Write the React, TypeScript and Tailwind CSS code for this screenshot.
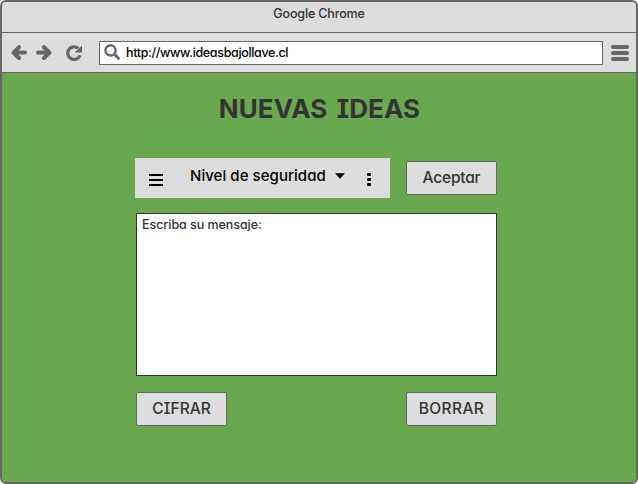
import type { ReactNode } from "react";

function Button({ children, spacing = "" }: { children: ReactNode; spacing?: string }) {
  return (
    <button
      className={`flex h-[34px] w-[91px] items-center justify-center rounded-[2px] border border-[#666] bg-[#ddd] pb-px text-[15.5px] font-[450] whitespace-nowrap text-[#333] ${spacing}`}
    >
      {children}
    </button>
  );
}

function ArrowLeft({ className = "" }: { className?: string }) {
  return (
    <svg viewBox="0 0 16 16" className={`size-4 ${className}`} fill="none" stroke="#666" strokeWidth="4" strokeLinecap="round" strokeLinejoin="round">
      <path d="M8 2.2 2.5 7.6 8 13" />
      <path d="M3.5 7.6H14" />
    </svg>
  );
}

function Reload() {
  return (
    <svg viewBox="0 0 16 16" className="ml-[14px] size-4" fill="none">
      <path d="M12.2 3.4A6.3 6.3 0 1 0 14 10.2" stroke="#666" strokeWidth="3.2" />
      <path d="M16 .6V7.4H8.6Z" fill="#666" />
    </svg>
  );
}

function Search() {
  return (
    <svg viewBox="0 0 16 16" className="mb-px size-4" fill="none" stroke="#666" strokeLinecap="round">
      <circle cx="6.5" cy="6.4" r="5.1" strokeWidth="2.4" />
      <path d="m10.8 10.6 3.6 3.6" strokeWidth="3" />
    </svg>
  );
}

export default function App() {
  return (
    <div className="h-[484px] w-[638px] bg-white font-['Inter','Liberation_Sans',sans-serif] [font-feature-settings:'cv11','cv08']">
      <div className="flex h-full flex-col overflow-hidden rounded-[6px] border-2 border-[#666] bg-[#6aa84f]">
        <header className="h-[31px] border-b border-[#666] bg-[#ddd] text-center text-[12.5px] leading-[23px] font-[450] tracking-[-0.15px] text-[#333]">
          Google Chrome
        </header>
        <nav className="flex h-10 shrink-0 items-center border-b border-[#666] bg-[#ddd] pl-[9px]">
          <ArrowLeft />
          <ArrowLeft className="ml-[9px] -scale-x-100" />
          <Reload />
          <div className="ml-[17px] flex h-6 w-[504px] shrink-0 items-center border border-[#666] bg-white pl-1">
            <Search />
            <span className="mt-[2px] ml-[6px] text-[12.5px] font-[450] tracking-[-0.34px] text-black">http://www.ideasbajollave.cl</span>
          </div>
          <div className="ml-2 flex shrink-0 flex-col gap-[2px]">
            <i className="h-1 w-[18px] rounded-full bg-[#666]" />
            <i className="h-1 w-[18px] rounded-full bg-[#666]" />
            <i className="h-1 w-[18px] rounded-full bg-[#666]" />
          </div>
        </nav>
        <main className="flex flex-1 flex-col pl-[134px]">
          <h1 className="mt-5 w-[367px] text-center text-[26px] leading-8 font-bold tracking-[0.1px] whitespace-nowrap text-[#333] [word-spacing:3px]">NUEVAS IDEAS</h1>
          <div className="mt-[33px] -ml-px flex w-[362px] items-start justify-between">
            <div className="flex h-10 w-[255px] items-center bg-[#ddd] pl-[14px] text-black">
              <div className="mt-[4px] flex w-[14px] flex-col gap-[3px]">
                <i className="h-[2px] bg-black" />
                <i className="h-[2px] bg-black" />
                <i className="h-[2px] bg-black" />
              </div>
              <span className="mb-[4px] ml-[27px] w-[136px] text-[15px] font-[450] tracking-[0.05px] whitespace-nowrap">Nivel de seguridad</span>
              <svg viewBox="0 0 10 6" className="mb-1 ml-[9px] h-[6px] w-[10px]">
                <path d="M.5.5h9L5 5.5Z" stroke="black" strokeWidth=".5" strokeLinejoin="round" />
              </svg>
              <div className="mt-[3px] ml-[22px] flex flex-col gap-[2px]">
                <i className="h-[3px] w-[4px] rounded-[1px] bg-black" />
                <i className="h-[3px] w-[4px] rounded-[1px] bg-black" />
                <i className="h-[3px] w-[4px] rounded-[1px] bg-black" />
              </div>
            </div>
            <div className="mt-[3px]">
              <Button spacing="tracking-[-0.2px]">Aceptar</Button>
            </div>
          </div>
          <div className="mt-[15px] h-[163px] w-[361px] border border-[#333] bg-white pl-[5px] text-[12.5px] leading-[22px] font-[450] tracking-[-0.05px] text-[#333]">
            Escriba su mensaje:
          </div>
          <div className="mt-4 flex w-[361px] justify-between">
            <Button>CIFRAR</Button>
            <Button spacing="tracking-[0.4px]">BORRAR</Button>
          </div>
        </main>
      </div>
    </div>
  );
}
